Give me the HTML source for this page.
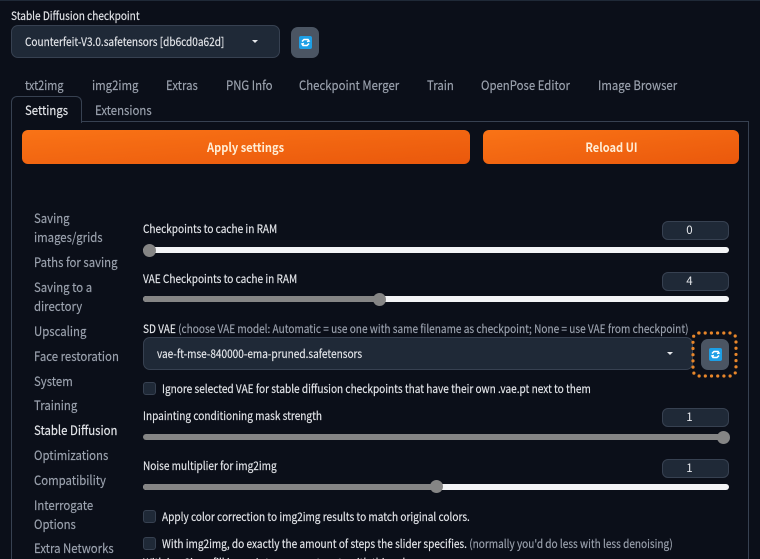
<!DOCTYPE html>
<html><head><meta charset="utf-8">
<style>
html,body{margin:0;padding:0;background:#0b0f19}
#p{position:relative;width:760px;height:559px;overflow:hidden;background:#0b0f19;font-family:"Noto Sans CJK JP","Liberation Sans",sans-serif;color:#e5e7eb;font-size:12px;filter:blur(.25px)}
#p div{position:absolute;box-sizing:border-box}
.t{white-space:nowrap;line-height:18px;transform:scaleX(.875);transform-origin:0 50%;-webkit-text-stroke:.15px currentColor}
.tab{font-size:13px;color:#9ca3af}
.side{font-size:13px;color:#9ca3af}
.lab{font-size:11.5px;color:#e5e7eb}
.btn{background:linear-gradient(to bottom right,#f97316,#ea580c);border-radius:6px;color:#ffedd5;font-weight:700;font-size:12.5px;text-align:center;height:34px;line-height:33px}
.btn span{display:inline-block;transform:scaleX(.885)}
.num{background:#1f2937;border:1px solid #374151;border-radius:6px;width:67px;height:19px;left:662px;text-align:center;font-size:11.5px;line-height:17px;color:#e5e7eb;padding-right:12px}
.track{left:143px;width:586px;height:6px;border-radius:3px;background:#f3f4f6}
.fill{left:143px;height:6px;border-radius:3px;background:#858585}
.th{width:13px;height:13px;border-radius:50%;background:#858585}
.cb{left:143px;width:13px;height:13px;border-radius:3px;background:#1f2937;border:1px solid #374151}
.sel{background:#1f2937;border:1px solid #374151;border-radius:7px}
.rf{width:28px;height:31px;background:#4b5563;border-radius:7px}
.ic{width:13px;height:13px;background:#1d9fe6;border-radius:2px;left:7.5px;top:9px}
.car{width:0;height:0;border-left:3.5px solid transparent;border-right:3.5px solid transparent;border-top:3.5px solid #e5e7eb}
</style></head><body><div id="p">
<div style="left:0;top:0;width:760px;height:1px;background:#1f2937"></div>
<div class="t lab" style="left:11px;top:7px">Stable Diffusion checkpoint</div>
<div class="sel" style="left:11px;top:25px;width:269px;height:33px"></div>
<div class="t" style="left:25px;top:32.5px;font-size:11.5px">Counterfeit-V3.0.safetensors [db6cd0a62d]</div>
<div class="car" style="left:252px;top:40px"></div>
<div class="rf" style="left:291px;top:27px"><div class="ic"><svg width="13" height="13" viewBox="0 0 13 13" style="display:block"><path d="M3 5.5L5 3.5H9L10 5L8 5.5M10 7.5L8 9.5H4L3 8L5 7.5" fill="none" stroke="#fff" stroke-width="1.5"/></svg></div></div>

<div class="t tab" style="left:25px;top:76px;transform:scaleX(.84)">txt2img</div>
<div class="t tab" style="left:92px;top:76px">img2img</div>
<div class="t tab" style="left:166px;top:76px">Extras</div>
<div class="t tab" style="left:225.5px;top:76px">PNG Info</div>
<div class="t tab" style="left:299px;top:76px">Checkpoint Merger</div>
<div class="t tab" style="left:427px;top:76px">Train</div>
<div class="t tab" style="left:481px;top:76px">OpenPose Editor</div>
<div class="t tab" style="left:598px;top:76px">Image Browser</div>

<div style="left:11px;top:121px;width:738px;height:440px;border:1px solid #374151"></div>
<div style="left:11px;top:96px;width:71px;height:27px;border:1px solid #374151;border-bottom:0;border-radius:6px 6px 0 0;background:#0b0f19"></div>
<div class="t" style="left:25px;top:101px;font-size:13px;color:#e5e7eb">Settings</div>
<div class="t tab" style="left:95px;top:101px">Extensions</div>

<div class="btn" style="left:22px;top:130px;width:448px"><span>Apply settings</span></div>
<div class="btn" style="left:483px;top:130px;width:256px"><span>Reload UI</span></div>

<div class="t side" style="left:34px;top:209px">Saving</div>
<div class="t side" style="left:34px;top:228px">images/grids</div>
<div class="t side" style="left:34px;top:253px">Paths for saving</div>
<div class="t side" style="left:34px;top:278px">Saving to a</div>
<div class="t side" style="left:34px;top:297px">directory</div>
<div class="t side" style="left:34px;top:322px">Upscaling</div>
<div class="t side" style="left:34px;top:346.5px">Face restoration</div>
<div class="t side" style="left:34px;top:371.5px">System</div>
<div class="t side" style="left:34px;top:396px">Training</div>
<div class="t side" style="left:34px;top:421px;color:#e5e7eb">Stable Diffusion</div>
<div class="t side" style="left:34px;top:445.5px">Optimizations</div>
<div class="t side" style="left:34px;top:470.5px">Compatibility</div>
<div class="t side" style="left:34px;top:495.5px">Interrogate</div>
<div class="t side" style="left:34px;top:514.5px">Options</div>
<div class="t side" style="left:34px;top:539px">Extra Networks</div>

<div class="t lab" style="left:143px;top:220px">Checkpoints to cache in RAM</div>
<div class="num" style="top:221px">0</div>
<div class="track" style="top:247px"></div>
<div class="th" style="left:143px;top:244px"></div>

<div class="t lab" style="left:143px;top:270px">VAE Checkpoints to cache in RAM</div>
<div class="num" style="top:272px">4</div>
<div class="track" style="top:296px"></div>
<div class="fill" style="top:296px;width:236px"></div>
<div class="th" style="left:373px;top:293px"></div>

<div class="t lab" style="left:143px;top:319.5px">SD VAE <span style="color:#9ca3af">(choose VAE model: Automatic = use one with same filename as checkpoint; None = use VAE from checkpoint)</span></div>
<div class="sel" style="left:143px;top:337px;width:550px;height:33px"></div>
<div class="t" style="left:157px;top:344.5px;font-size:11.5px">vae-ft-mse-840000-ema-pruned.safetensors</div>
<div class="car" style="left:667px;top:352px"></div>
<svg width="50" height="50" style="position:absolute;left:690px;top:330px"><rect x="3" y="3" width="43" height="43" rx="6" fill="none" stroke="#e8862a" stroke-width="3.2" stroke-linecap="round" stroke-dasharray="0 6.2"/></svg>
<div class="rf" style="left:701px;top:339px"><div class="ic"><svg width="13" height="13" viewBox="0 0 13 13" style="display:block"><path d="M3 5.5L5 3.5H9L10 5L8 5.5M10 7.5L8 9.5H4L3 8L5 7.5" fill="none" stroke="#fff" stroke-width="1.5"/></svg></div></div>

<div class="cb" style="top:382px"></div>
<div class="t lab" style="left:162px;top:380px">Ignore selected VAE for stable diffusion checkpoints that have their own .vae.pt next to them</div>

<div class="t lab" style="left:143px;top:406.5px">Inpainting conditioning mask strength</div>
<div class="num" style="top:408px">1</div>
<div class="track" style="top:434px;background:#858585"></div>
<div class="th" style="left:717px;top:431px"></div>

<div class="t lab" style="left:143px;top:457px">Noise multiplier for img2img</div>
<div class="num" style="top:459px">1</div>
<div class="track" style="top:484px"></div>
<div class="fill" style="top:484px;width:294px"></div>
<div class="th" style="left:430px;top:480px"></div>

<div class="cb" style="top:510px"></div>
<div class="t lab" style="left:162px;top:507.5px">Apply color correction to img2img results to match original colors.</div>
<div class="cb" style="top:537px"></div>
<div class="t lab" style="left:162px;top:534.5px">With img2img, do exactly the amount of steps the slider specifies. <span style="color:#9ca3af">(normally you'd do less with less denoising)</span></div>
<div class="t lab" style="left:143px;top:554px">With img2img, fill image's transparent parts with this color.</div>
</div></body></html>
